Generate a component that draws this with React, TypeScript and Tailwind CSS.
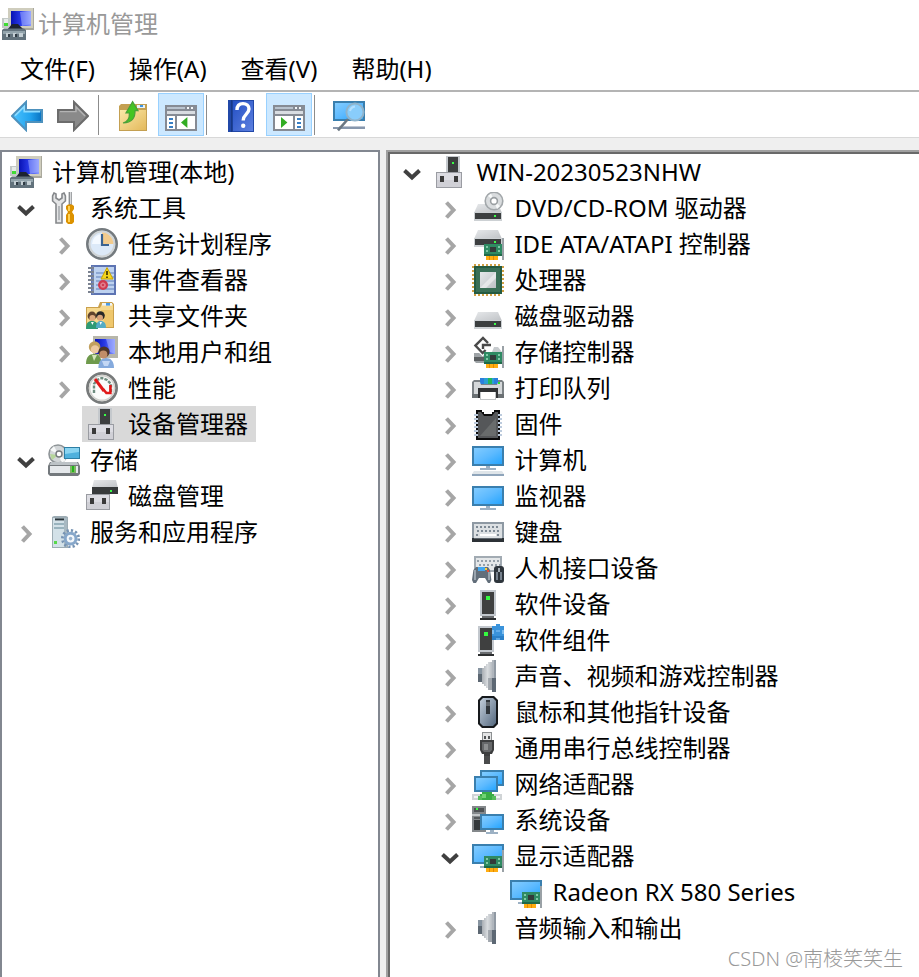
import { ReactNode, useState } from "react";

type TreeNode = {
  id: string;
  label: string;
  icon: ReactNode;
  open?: boolean;
  closed?: boolean;
  children?: TreeNode[];
};

function Icon({ children }: { children: ReactNode }) {
  return (
    <svg
      className="size-8 shrink-0"
      viewBox="0 0 16 16"
      aria-hidden="true"
      fill="none"
    >
      {children}
    </svg>
  );
}

/* shared icon parts */

function Screen({ x = 0, y = 1, w = 16, h = 10 }) {
  return (
    <>
      <rect x={x} y={y} width={w} height={h} fill="#3a7fae" />
      <rect x={x + 1} y={y + 1} width={w - 2} height={h - 2} fill="url(#screen)" />
    </>
  );
}

function Card() {
  return (
    <>
      <path d="M15 5h1v11h-1z" fill="#9aa1a6" />
      <path d="M6 8h9v6H6z" fill="#2f8a63" />
      <path d="M6 13h9v1H6z" fill="#206a4a" />
      <path d="M7 9h1v1H7zM7 11h1v1H7zM13 9h1v1h-1zM13 11h1v1h-1z" fill="#7fc9a6" />
      <path d="M9 9.5h3v2.5H9z" fill="#333b3a" />
      <path d="M7 14h6v2H7z" fill="#ffae12" />
      <path d="M8.5 14h.5v2h-.5zM10.5 14h.5v2h-.5z" fill="#e58a00" />
    </>
  );
}

function Drive({ x = 1, y = 6, w = 14 }) {
  return (
    <>
      <path d={`M${x + 2} ${y}h${w - 4}l2 4.5H${x}z`} fill="url(#metal)" />
      <rect x={x} y={y + 4} width={w} height="4.5" fill="#cdd1d4" />
      <rect x={x + 0.5} y={y + 4.5} width={w - 1} height="3" fill="#3c3f40" />
      <rect x={x + w - 4} y={y + 5.5} width="1" height="1" fill="#3cff4a" />
    </>
  );
}

function Speaker() {
  return (
    <Icon>
      <path d="M3 4h2v7H3z" fill="#5c6772" />
      <path d="M3 4h2v3H3z" fill="#8794a0" />
      <path d="M5 4h1V3h1V2h1V1h2V0h2v16h-2v-1H8v-1H7v-1H6v-1H5z" fill="url(#cone)" />
      <path d="M10 0h2v16h-2z" fill="#9099a3" />
      <path d="M10 0h1v16h-1z" fill="#b0b6bd" />
      <path d="M10 9h2v7h-2z" fill="#5d6874" />
      <path d="M8 9h2v6H8z" fill="#858c94" opacity=".6" />
    </Icon>
  );
}

function ComputerManagement() {
  return (
    <Icon>
      <path d="M3 0h13v11H3z" fill="#aaa99d" />
      <path d="M3 0h12.5v10H3z" fill="#cfcdbd" />
      <path d="M4.500 1.500h10V9h-10z" fill="url(#blue)" />
      <path d="M9 2l5.500-.5V8L10 9z" fill="#aab8ff" opacity=".5" />
      <path d="M0 5h4v5H0z" fill="#c3c9c7" />
      <path d="M1 5.500h2v3H1z" fill="#e6ebe7" />
      <path d="M1 7.500h2V9H1z" fill="#3fdc34" />
      <path d="M3 10.500l2-2.500h3l2.500 2.500z" fill="#1c2330" />
      <path d="M0 11l1-.8h10l1 .8v5H0z" fill="#62727c" />
      <path d="M.5 11.500h11V13H.5z" fill="#93a4ac" />
      <path d="M2 12.500h2v2H2zM5.500 12.500H7v2H5.500zM8.500 12.500h2v2h-2z" fill="#c3ced3" />
      <path d="M3 13h1v1.500H3zM6.500 13h1v1.500h-1z" fill="#2f3b44" />
    </Icon>
  );
}

function Tools() {
  return (
    <Icon>
      <path
        d="M3 .5L2.300 2v2.500L4 6v9.500h3V6l1.700-1.500V2L8 .5 7 1v2L5.500 4 4 3V1z"
        fill="#e4e5e6"
        stroke="#85888b"
        strokeWidth=".8"
      />
      <path d="M5 7h1v7H5z" fill="#b4b7ba" />
      <path d="M10.300 0h1.600v7h-1.600z" fill="#8b8e91" />
      <path d="M11 0h.5v6H11z" fill="#d7d9da" />
      <path d="M9 7l1-.7h2l1 .7v1.500L12 10l1 1.500V15l-1 1h-2l-1-1v-3.500L10 10 9 8.500z" fill="#dc9200" />
      <path d="M10 7h1v2.500h-1zM10 11h1v4h-1z" fill="#ffd257" />
    </Icon>
  );
}

function Clock() {
  return (
    <Icon>
      <circle cx="8" cy="8" r="7.300" fill="#dce9f8" stroke="#747a7e" strokeWidth="1.400" />
      <circle cx="8" cy="8" r="6.200" stroke="#d0d4d6" />
      <path d="M8 8V2.300A5.700 5.700 0 0 1 13.700 8z" fill="#f2cb8d" />
      <path d="M3 8a5 5 0 0 1 5-5v5z" fill="#f4f9ff" />
      <path d="M8 3v5.500h3.500" stroke="#3b6391" strokeWidth="1.100" />
    </Icon>
  );
}

function EventViewer() {
  return (
    <Icon>
      <path d="M2.500 .5H15v15H2.500z" fill="#5d74b3" />
      <path d="M4 1.500h10v13H4z" fill="#bed2ef" />
      <path d="M5 4.500h9M5 6.500h9M5 8.500h9M5 10.500h9M5 12.500h9" stroke="#7f9acb" strokeWidth=".7" />
      <path d="M3.500 1v14" stroke="#7688b5" />
      <path d="M1 2h3M1 4h3M1 6h3M1 8h3M1 10h3M1 12h3M1 14h3" stroke="#7b8290" strokeWidth=".9" />
      <path d="M10.500 1.800l3 5.700h-6z" fill="#f4d51e" stroke="#c9a300" strokeWidth=".5" />
      <path d="M10.500 3.500v2M10.500 6.200v.8" stroke="#4a3c00" strokeWidth=".9" />
      <circle cx="8.500" cy="10.500" r="2.500" fill="#cf3a50" />
      <circle cx="8.500" cy="10.500" r="1.300" fill="#e99aa6" />
      <path d="M7.800 9.800l1.400 1.400M9.200 9.800l-1.400 1.400" stroke="#cf3a50" strokeWidth=".6" />
    </Icon>
  );
}

function SharedFolder() {
  return (
    <Icon>
      <path d="M0 3.500h6L7 1h6l1 1v12H0z" fill="#caa04c" />
      <path d="M.5 4H7l1-2h5.500v11.500H.5z" fill="#f6d88d" />
      <path d="M7.500 5h6v8.500h-4z" fill="#efc76c" />
      <path d="M8 1.500h5v1.300H8z" fill="#eef4f8" />
      <path d="M10 1.500h2v1.300h-2z" fill="#4a9be6" />
      <path d="M0 14.500c0-3 1-4 3-4s3 1 3 4z" fill="#2f9a74" />
      <path d="M5 14c0-2.700 1-3.500 2.500-3.500S10 11.500 10 14z" fill="#55acc5" />
      <circle cx="3" cy="8" r="2.200" fill="#62452d" />
      <circle cx="3.200" cy="9" r="1.500" fill="#e0ad80" />
      <circle cx="7.200" cy="7.800" r="2.200" fill="#2a2927" />
      <circle cx="7" cy="8.900" r="1.500" fill="#dba57a" />
      <path d="M2.500 11l.7 1.500.7-1.500zM6.800 11l.5 1.500.7-1.500z" fill="#fff" />
    </Icon>
  );
}

function Users() {
  return (
    <Icon>
      <path d="M3.500 0H16v11H3.500z" fill="#b7b6aa" />
      <path d="M4.500 1.500h10V9h-10z" fill="url(#blue)" />
      <path d="M10 1.500h4.500V9L12 8z" fill="#aebaff" opacity=".5" />
      <path d="M0 14c0-3.500 1.500-5 4-5s3.500 1.500 4 5z" fill="#6f9a4c" />
      <path d="M3 9.500l1 3 1.500-3z" fill="#d4e6bb" />
      <circle cx="4.300" cy="5.500" r="2.900" fill="#c2a05e" />
      <circle cx="4.500" cy="6.700" r="2.100" fill="#edc9a0" />
      <path d="M6.200 16c0-3.500 1.500-5 3.800-5s4 1.500 4 5z" fill="#85aadd" />
      <path d="M8 12.500l1 2.500h2l1-2.500z" fill="#c3d7f4" />
      <circle cx="9" cy="8" r="2.800" fill="#4c3527" />
      <circle cx="8.700" cy="9.300" r="2" fill="#c08d68" />
    </Icon>
  );
}

function Performance() {
  return (
    <Icon>
      <circle cx="8" cy="8" r="7.300" fill="#fbfbfa" stroke="#777a7a" strokeWidth="1.400" />
      <circle cx="8" cy="8" r="6.200" stroke="#d2d2ce" strokeWidth=".8" />
      <path
        d="M4 10.500V6l1.500-2 2.500-1 2.500 1 2 2v4.500"
        stroke="#6f8d80"
        strokeWidth="1.200"
        strokeDasharray="1.600 .6"
      />
      <path d="M4.500 3.500L9 9.500" stroke="#e01818" strokeWidth="1.500" />
      <path d="M8.500 8.500l1.700 2h2V6.500" stroke="#e01818" strokeWidth="1.300" />
    </Icon>
  );
}

function DeviceManager() {
  return (
    <Icon>
      <path d="M6 0h7v8H6z" fill="#c5c9cd" />
      <path d="M7 .5h5V8H7z" fill="#3d3f40" />
      <path d="M9 3h1v1H9z" fill="#38ff45" />
      <path d="M1 8h13v8H1z" fill="#9a9ca2" />
      <path d="M1.500 8.500h12v7h-12z" fill="#dcdce2" />
      <path d="M1.500 12h12v3.500h-12z" fill="#d0d0d6" />
      <path d="M3 10h2v3H3zM10 10h2v3h-2z" fill="#3a3a3a" />
    </Icon>
  );
}

function Storage() {
  return (
    <Icon>
      <circle cx="5" cy="5" r="4.500" fill="#d2d6d8" stroke="#8e9497" strokeWidth=".8" />
      <path d="M5 5L1 3l2-2zM5 5l4 3-2 1.500z" fill="#f6f8f8" />
      <path d="M1 5l4 .5L2 8z" fill="#b6d69b" />
      <circle cx="5.500" cy="5" r="1.500" fill="#fff" stroke="#74797c" strokeWidth=".7" />
      <path d="M8 1.500h8v6H8z" fill="#2e7fa5" />
      <path d="M8.500 2h7v5h-7z" fill="#4fb1dd" />
      <path d="M8.500 2h7v2l-7 1z" fill="#8ad4f1" />
      <path d="M1 9h14l1 2v4l-1 1H1l-1-1v-4z" fill="#74797d" />
      <path d="M1.500 9h13l.8 1.500H.7z" fill="#bcc2c6" />
      <path d="M1 11h14v3.500H1z" fill="#e5e8eb" />
      <path d="M11 11h3v3.500h-3z" fill="#7fb665" />
      <path d="M12 11h1v3h-1z" fill="#24b51c" />
    </Icon>
  );
}

function DiskManagement() {
  return (
    <Icon>
      <path d="M4 0h11l1 4H3z" fill="url(#metal)" />
      <path d="M3 3.500h13V7H3z" fill="#373a3b" />
      <path d="M12 5h1v1h-1z" fill="#38ff45" />
      <path d="M0 7h12v8H0z" fill="#9a9ca2" />
      <path d="M.5 7.500h11v7H.5z" fill="#dcdce2" />
      <path d="M.5 11h11v3.500H.5z" fill="#d0d0d6" />
      <path d="M2 9h2v3H2zM8 9h2v3H8z" fill="#3a3a3a" />
    </Icon>
  );
}

function Services() {
  return (
    <Icon>
      <path d="M2 .5L3 0h6l1 .5V16H2z" fill="#9dacb4" />
      <path d="M2.500 1H8v14.500H2.500z" fill="#d3e1e8" />
      <path d="M8 1h1.500v14.500H8z" fill="#a8b9c2" />
      <path d="M3.500 1.200H8v1H3.500z" fill="#29343a" />
      <path d="M3 4h5M3 6h5" stroke="#87a4b0" strokeWidth=".8" />
      <path d="M3 12.500h1.500V14H3z" fill="#58d94a" />
      <circle cx="11.300" cy="11.300" r="4.100" stroke="#7693b3" strokeWidth="1.400" strokeDasharray="1.100 1.050" />
      <circle cx="11.300" cy="11.300" r="2.700" fill="#f3f7fb" stroke="#86a7ca" strokeWidth="1.500" />
      <circle cx="11.300" cy="11.300" r=".9" fill="#9bb5d0" />
    </Icon>
  );
}

function Dvd() {
  return (
    <Icon>
      <Drive y={6} />
      <circle cx="11" cy="4.500" r="4.400" fill="#d9dcde" stroke="#a2a7aa" strokeWidth=".8" />
      <path d="M11 4.500L8 2 9.500.700zM11 4.500l3 2.500-1.500 1.500z" fill="#f7f9f9" />
      <circle cx="11" cy="4.500" r="1.700" fill="#fff" stroke="#9a9fa2" strokeWidth=".8" />
    </Icon>
  );
}

function Ide() {
  return (
    <Icon>
      <Drive y={1} />
      <Card />
    </Icon>
  );
}

function Cpu() {
  return (
    <Icon>
      <path
        d="M1 .5h14M1 15.500h14M.5 1v14M15.500 1v14"
        stroke="#d0a045"
        strokeDasharray="1 1"
      />
      <path d="M1 1h14v14H1z" fill="#245b42" />
      <path d="M2 2h12v12H2z" fill="#396f56" />
      <path d="M4 4h8v8H4z" fill="url(#metal)" />
      <path d="M4 12l8-8v3l-5 5z" fill="#f5f5f5" opacity=".6" />
    </Icon>
  );
}

function StorageController() {
  return (
    <Icon>
      <path d="M1 8.500h7v5H2l-1-1z" fill="#9ea3a6" />
      <path d="M1 10.500h6v2H1z" fill="#5b5f61" />
      <path d="M11 5.500h2l2 2.500h-5z" fill="#c7cbce" />
      <path
        d="M8 3.500L5.500 1 1.700 4.800l3.600 3.700 1.500-1.500M9.500 4.500h-4v3"
        stroke="#fff"
        strokeWidth="2.400"
      />
      <path
        d="M8 3.500L5.500 1 1.700 4.800l3.600 3.700 1.500-1.500M9.500 4.500h-4v2"
        stroke="#4a4a4a"
        strokeWidth="1.200"
      />
      <Card />
    </Icon>
  );
}

function Printer() {
  return (
    <Icon>
      <path d="M4 3h9v3H4z" fill="#2a7fdd" />
      <path d="M6 3h5v3H6z" fill="#2a9fd4" />
      <path d="M8 3h2v3H8z" fill="#23b65b" />
      <path d="M1 4h3v2h9V4h2l1 1v8H0V5z" fill="#7b8185" />
      <path d="M1 5h3l.5 1.500h8L13 5h2v7H1z" fill="#d5d8da" />
      <path d="M13 5h1v1h-1z" fill="#25e32c" />
      <path d="M0 11h3v2H0zM13 11h3v2h-3z" fill="#6a7073" />
      <path d="M3 8h10v5h-1v-2.500H4V13H3z" fill="#303234" />
      <path d="M4 10h8v4H4z" fill="#c2c5c7" />
      <path d="M4.500 10h7v3.500h-7z" fill="#fff" />
    </Icon>
  );
}

function Firmware() {
  return (
    <Icon>
      <path d="M2 1h3v1h1v1h4V2h1V1h3v15H2z" fill="#0c0c0c" />
      <path d="M3 2h1.500l1.500 2h4l1.500-2H13v13H3z" fill="#555759" />
      <path d="M4 14l8-9v9z" fill="#77797a" opacity=".6" />
      <path d="M2 3v11M14 3v11" stroke="#bccbdd" strokeWidth="2" strokeDasharray="1 1" />
    </Icon>
  );
}

function Computer() {
  return (
    <Icon>
      <Screen />
      <path d="M7 11h2v1h3v1H4v-1h3z" fill="#9cb1c4" />
      <path d="M1 13.500h14l1 1.500H0z" fill="#dfe5e9" />
      <path d="M0 15h16v1H0z" fill="#8fa5bb" />
    </Icon>
  );
}

function Monitor() {
  return (
    <Icon>
      <Screen y={3} />
      <path d="M7 13h2v1h3v1H4v-1h3z" fill="#9cb1c4" />
    </Icon>
  );
}

function Keyboard() {
  return (
    <Icon>
      <path d="M0 3h16v9H0z" fill="#8e99a3" />
      <path d="M1 4h14v7H1z" fill="#dce0e3" />
      <path
        d="M2 5.500h12M2.500 7.500h12M2 9.500h2M12.500 9.500h2"
        stroke="#7d8994"
        strokeDasharray="1 1"
      />
      <path d="M4 9h8v1H4z" fill="#fff" />
      <path d="M0 11h16v2H0z" fill="#2c3136" />
      <path d="M1 11h14v.5H1z" fill="#5e666d" />
    </Icon>
  );
}

function Hid() {
  return (
    <Icon>
      <path d="M1 2h14v8H1z" fill="#a2abb3" />
      <path d="M2 3h12v6H2z" fill="#e4e7e9" />
      <path d="M2.500 4.500h11M3.500 6.500h11" stroke="#959fa8" strokeDasharray="1 1" />
      <path
        d="M2 7.500h6l1 1.500.7 5-.7 1.500H8L6.500 13h-3L2 15.500H.7L0 14l.7-5z"
        fill="#626e7a"
      />
      <path d="M1 9h1v5H1zM8 10h1v4H8z" fill="#99a4ae" />
      <path d="M3 7.500h3.500v2H3z" fill="#43a7ef" />
      <path d="M6.500 8h1v1h-1z" fill="#ffce32" />
      <path d="M7.500 9h1v1h-1z" fill="#e94a35" />
      <rect x="11" y="7" width="5" height="8.500" rx="1.500" fill="#2e353c" />
      <path d="M12 10h1v4h-1zM14 10h1v4h-1z" fill="#77828e" />
      <path d="M13 8h1v2h-1z" fill="#a7b0b8" />
    </Icon>
  );
}

function Software({ component = false }) {
  const x = component ? 3 : 4;
  return (
    <Icon>
      <rect x={x} y="1" width="8" height="13" fill="#c3c8ce" />
      <rect x={x + 1} y="2" width="6" height="11" fill="#3f4040" />
      <rect x={x + 3} y="4" width="2" height="2" fill="#35fa40" />
      <rect x={x + 1} y="14" width="6" height="1" fill="#6a6d70" />
      <rect x={x} y="15" width="8" height="1" fill="#2d2f30" />
      {component && (
        <>
          <path d="M10 1h2V0h2v1h2v7h-6z" fill="#3a93db" />
          <path d="M10 3h1v2h-1zM15 3h1v2h-1z" fill="#7fbdee" />
          <path d="M12 3h2v1h-2z" fill="#62acea" />
          <path d="M10 6h6v2h-6z" fill="#2b80c8" />
          <path d="M12 7h2v1h-2z" fill="#5fa8e4" />
        </>
      )}
    </Icon>
  );
}

function Mouse() {
  return (
    <Icon>
      <path d="M5 0h6l2 2v12l-2 2H5l-2-2V2z" fill="#16191c" />
      <path d="M5.500 1h5L12 2.500v11L10.500 15h-5L4 13.500v-11z" fill="url(#mouse)" />
      <path d="M7 2h2v7H7z" fill="#30363c" />
      <path d="M7 3h2v2H7z" fill="#62686e" />
    </Icon>
  );
}

function Usb() {
  return (
    <Icon>
      <path d="M5 0h5v5H5z" fill="#8c8f91" />
      <path d="M5.500.500h4V5h-4z" fill="#e3e4e5" />
      <path d="M6 2h1v1.500H6zM8 2h1v1.500H8z" fill="#505355" />
      <path d="M4 4h7v5l-1 2H9v1H6v-1H5L4 9z" fill="#3d3e3f" />
      <path d="M5 5h5v4l-1 1H6L5 9z" fill="#66686a" />
      <path d="M6 6h2v3H6z" fill="#8d8f90" />
      <path d="M6 12h3v4H6z" fill="#4a4b4c" />
    </Icon>
  );
}

function Network() {
  return (
    <Icon>
      <Screen x={4} w={12} h={8} />
      <Screen x={1} y={4} w={12} h={8} />
      <path d="M0 13h15v3H0z" fill="#d0d4d6" />
      <path d="M1 14h13v1H1z" fill="#f2f4f5" />
      <path d="M5 12h5v1h1v3H4v-3h1z" fill="#39ad45" />
      <path d="M5 13h2v2H5z" fill="#72d474" />
      <path d="M3 14h2v2H3zM10 14h2v2h-2z" fill="#57bd5b" />
    </Icon>
  );
}

function SystemDevices() {
  return (
    <Icon>
      <path d="M0 1h7v13H0z" fill="#84888b" />
      <path d="M1 2h5v2H1z" fill="#4e5254" />
      <path d="M2 2h1v1H2z" fill="#39ff44" />
      <path d="M0 5h6v1H0z" fill="#c3c7c9" />
      <path d="M1 8h3v5H1z" fill="#34383a" />
      <path d="M1 6.500h3v1H1z" fill="#53585a" />
      <Screen x={4} y={5} w={12} h={8} />
      <path d="M9 13h2v1h2v1H7v-1h2z" fill="#9cb1c4" />
    </Icon>
  );
}

function DisplayAdapter() {
  return (
    <Icon>
      <Screen y={2} />
      <path d="M4 13h3v1H4z" fill="#9cb1c4" />
      <Card />
    </Icon>
  );
}

/* toolbar icons */

function Arrow({ forward = false }) {
  return (
    <Icon>
      {forward ? (
        <path d="M15.500 8L8.500 1v4H.5v6h8v4z" fill="#8a8a8a" stroke="#6c6c6c" />
      ) : (
        <path d="M.5 8l7-7v4h8v6h-8v4z" fill="url(#back)" stroke="#4d91bd" />
      )}
      {forward ? (
        <path d="M1.500 5.800h8V3.500L14 8" stroke="#b4b4b4" strokeWidth=".7" />
      ) : (
        <path d="M2 7.800l4.600-4.500v2.500h8" stroke="#8fdcff" strokeWidth=".8" />
      )}
    </Icon>
  );
}

function UpFolder() {
  return (
    <Icon>
      <path d="M1 3l1-1h6v1l1-1h6v13.500H1z" fill="#c4a052" />
      <path d="M1.500 5h13v10h-13z" fill="url(#folder)" />
      <path d="M10 2.500h4V4h-4z" fill="#e9f3f8" />
      <path d="M11.500 2.500H13v1h-1.500z" fill="#3f96e2" />
      <path
        d="M3 11.500c2.500-.5 3.300-2.500 3.200-5H4.500L7.800.800l2.700 4.500H9c.2 3.500-1.500 6-6 6.200z"
        fill="#45c522"
        stroke="#49a03a"
        strokeWidth=".6"
      />
    </Icon>
  );
}

function PanelIcon({ right = false }) {
  return (
    <Icon>
      <path d="M0 2.500h16v13H0z" fill="#868b94" />
      <path d="M1 3.500h9v1H1z" fill="#b9c3ce" />
      <path d="M11 3.500h1v1h-1zM13 3.500h1v1h-1z" fill="#f5f8fa" />
      <path d="M1 5.500h14V7H1z" fill="#d9dde2" />
      <path d="M1 8h14v6.500H1z" fill="#fff" />
      {right ? (
        <>
          <path d="M10 8h1v7h-1z" fill="#868b94" />
          <path d="M12 9h2v1h-2zM12 11h2v1h-2zM12 13h2v1h-2z" fill="#397fc4" />
          <path d="M4 8.500l3.200 2.700L4 14z" fill="#32ad24" />
        </>
      ) : (
        <>
          <path d="M5 8h1v7H5z" fill="#868b94" />
          <path d="M2 9h2v1H2zM2 11h2v1H2zM2 13h2v1H2z" fill="#397fc4" />
          <path d="M11.200 8.500V14L8 11.200z" fill="#32ad24" />
        </>
      )}
    </Icon>
  );
}

function Help() {
  return (
    <Icon>
      <path d="M1.500 0h13v16h-13z" fill="#2148a8" />
      <path d="M4 .5h10v15H4z" fill="url(#help)" />
      <path d="M3 0h.7v16H3z" fill="#183986" />
      <path
        d="M6 5c0-2.500 1.300-3.200 3-3.200s3 1 3 2.700c0 2.500-2.900 2.700-2.900 5.700"
        stroke="#fff"
        strokeWidth="1.700"
      />
      <circle cx="9.100" cy="12.900" r="1.100" fill="#fff" />
    </Icon>
  );
}

function ScanMonitor() {
  return (
    <Icon>
      <Screen y={0.5} />
      <path d="M3 13h13v1H3z" fill="#bdc6d3" />
      <path d="M0 13.500h16v1H0z" fill="#8797ad" />
      <path d="M7.500 9.500l-5 5.700" stroke="#6b7782" strokeWidth="1.300" />
      <circle cx="11" cy="6" r="4.300" fill="#89cdfb" stroke="#8fb3cb" />
      <path d="M8.500 5.500A3 3 0 0 1 11 3.300" stroke="#b4e0ff" />
    </Icon>
  );
}

const consoleTree: TreeNode = {
  id: "root",
  label: "计算机管理(本地)",
  icon: <ComputerManagement />,
  children: [
    {
      id: "tools",
      label: "系统工具",
      icon: <Tools />,
      open: true,
      children: [
        { id: "tasks", label: "任务计划程序", icon: <Clock />, closed: true },
        { id: "events", label: "事件查看器", icon: <EventViewer />, closed: true },
        { id: "shares", label: "共享文件夹", icon: <SharedFolder />, closed: true },
        { id: "users", label: "本地用户和组", icon: <Users />, closed: true },
        { id: "perf", label: "性能", icon: <Performance />, closed: true },
        { id: "devices", label: "设备管理器", icon: <DeviceManager /> },
      ],
    },
    {
      id: "storage",
      label: "存储",
      icon: <Storage />,
      open: true,
      children: [{ id: "disks", label: "磁盘管理", icon: <DiskManagement /> }],
    },
    { id: "services", label: "服务和应用程序", icon: <Services />, closed: true },
  ],
};

const deviceTree: TreeNode = {
  id: "host",
  label: "WIN-20230523NHW",
  icon: <DeviceManager />,
  open: true,
  children: [
    { id: "dvd", label: "DVD/CD-ROM 驱动器", icon: <Dvd />, closed: true },
    { id: "ide", label: "IDE ATA/ATAPI 控制器", icon: <Ide />, closed: true },
    { id: "cpu", label: "处理器", icon: <Cpu />, closed: true },
    { id: "disk", label: "磁盘驱动器", icon: <Icon><Drive /></Icon>, closed: true },
    { id: "controller", label: "存储控制器", icon: <StorageController />, closed: true },
    { id: "print", label: "打印队列", icon: <Printer />, closed: true },
    { id: "firmware", label: "固件", icon: <Firmware />, closed: true },
    { id: "computer", label: "计算机", icon: <Computer />, closed: true },
    { id: "monitor", label: "监视器", icon: <Monitor />, closed: true },
    { id: "keyboard", label: "键盘", icon: <Keyboard />, closed: true },
    { id: "hid", label: "人机接口设备", icon: <Hid />, closed: true },
    { id: "software", label: "软件设备", icon: <Software />, closed: true },
    { id: "component", label: "软件组件", icon: <Software component />, closed: true },
    { id: "sound", label: "声音、视频和游戏控制器", icon: <Speaker />, closed: true },
    { id: "mouse", label: "鼠标和其他指针设备", icon: <Mouse />, closed: true },
    { id: "usb", label: "通用串行总线控制器", icon: <Usb />, closed: true },
    { id: "network", label: "网络适配器", icon: <Network />, closed: true },
    { id: "system", label: "系统设备", icon: <SystemDevices />, closed: true },
    {
      id: "display",
      label: "显示适配器",
      icon: <DisplayAdapter />,
      open: true,
      children: [
        { id: "radeon", label: "Radeon RX 580 Series", icon: <DisplayAdapter /> },
      ],
    },
    { id: "audio", label: "音频输入和输出", icon: <Speaker />, closed: true },
  ],
};

type TreeItemProps = {
  node: TreeNode;
  selected: string;
  onSelect: (id: string) => void;
  isRoot?: boolean;
};

function TreeItem({ node, selected, onSelect, isRoot }: TreeItemProps) {
  const fixed = isRoot && !node.open;
  const [open, setOpen] = useState(Boolean(node.open) || Boolean(fixed));

  return (
    <li>
      <div className="flex h-9">
        {!fixed &&
          (node.open || node.closed ? (
            <button
              type="button"
              aria-label={node.label}
              aria-expanded={open}
              onClick={() => setOpen(!open)}
              className="flex w-[38px] shrink-0 items-center justify-center pt-1 pl-0.5"
            >
              <svg width="20" height="20" viewBox="0 0 20 20" fill="none">
                {open ? (
                  <path d="M2.500 6.500L10 13.500l7.500-7" stroke="#404040" strokeWidth="4" />
                ) : (
                  <path d="M6.500 2.500L13.500 10l-7 7.500" stroke="#a6a6a6" strokeWidth="4" />
                )}
              </svg>
            </button>
          ) : (
            <span className="w-[38px] shrink-0" />
          ))}
        <button
          type="button"
          onClick={() => onSelect(node.id)}
          className={`flex items-center gap-2.5 whitespace-nowrap pl-1 pr-2 ${
            selected === node.id ? "bg-[#d9d9d9]" : ""
          }`}
        >
          {node.icon}
          <span>{node.label}</span>
        </button>
      </div>
      {open && node.children && (
        <ul className={fixed ? "" : "pl-[38px]"}>
          {node.children.map((child) => (
            <TreeItem
              key={child.id}
              node={child}
              selected={selected}
              onSelect={onSelect}
            />
          ))}
        </ul>
      )}
    </li>
  );
}

type ToolButtonProps = { label: string; active?: boolean; children: ReactNode };

function ToolButton({ label, active, children }: ToolButtonProps) {
  return (
    <button
      type="button"
      aria-label={label}
      className={`flex h-[43px] w-[46px] items-center justify-center border pt-0.5 ${
        active ? "border-[#99d1ff] bg-[#cce8ff]" : "border-transparent"
      }`}
    >
      {children}
    </button>
  );
}

function Separator() {
  return <span className="ml-0.5 mr-[11px] h-10 w-px bg-[#8c8c8c]" />;
}

const menus = ["文件(F)", "操作(A)", "查看(V)", "帮助(H)"];

function App() {
  const [selected, setSelected] = useState("devices");
  const [device, setDevice] = useState("");

  return (
    <div className="relative flex min-h-screen flex-col bg-white font-['Noto_Sans','Noto_Sans_CJK_SC',sans-serif] text-2xl leading-9 text-black">
      {/* gradients used by the icons */}
      <svg className="absolute size-0" aria-hidden="true">
        <defs>
          <linearGradient id="screen" x1="0" y1="0" x2="1" y2="1">
            <stop offset="0" stopColor="#83ccff" />
            <stop offset=".5" stopColor="#5dbaff" />
            <stop offset="1" stopColor="#25a5ff" />
          </linearGradient>
          <linearGradient id="metal" x1="0" y1="0" x2="1" y2="1">
            <stop offset="0" stopColor="#e6e8ea" />
            <stop offset="1" stopColor="#bfc2c6" />
          </linearGradient>
          <linearGradient id="blue" x1="0" y1="0" x2="1" y2="0">
            <stop offset="0" stopColor="#0812b4" />
            <stop offset=".5" stopColor="#2a3be8" />
            <stop offset="1" stopColor="#8d9cff" />
          </linearGradient>
          <linearGradient id="cone" x1="0" y1="0" x2="1" y2="0">
            <stop offset="0" stopColor="#a9aeb4" />
            <stop offset=".4" stopColor="#d9dcdf" />
            <stop offset="1" stopColor="#9aa1a8" />
          </linearGradient>
          <linearGradient id="mouse" x1="0" y1="0" x2="1" y2="1">
            <stop offset="0" stopColor="#c2cedb" />
            <stop offset="1" stopColor="#54687e" />
          </linearGradient>
          <linearGradient id="back" x1="0" y1="0" x2="1" y2="0">
            <stop offset="0" stopColor="#4ec4ff" />
            <stop offset=".6" stopColor="#22a3ee" />
            <stop offset="1" stopColor="#0871c0" />
          </linearGradient>
          <linearGradient id="folder" x1="0" y1="0" x2="1" y2="1">
            <stop offset="0" stopColor="#fbe8a8" />
            <stop offset="1" stopColor="#e3b95c" />
          </linearGradient>
          <linearGradient id="help" x1="0" y1="0" x2="1" y2="1">
            <stop offset="0" stopColor="#2450c4" />
            <stop offset="1" stopColor="#5d80e0" />
          </linearGradient>
        </defs>
      </svg>

      <header className="flex h-12 items-center gap-1 pl-0.5 text-[#999999]">
        <ComputerManagement />
        <h1>计算机管理</h1>
      </header>

      <nav className="flex h-11 items-center gap-0.5 border-b-2 border-[#b4b4b4] pl-1">
        {menus.map((menu) => (
          <button key={menu} type="button" className="px-4">
            {menu}
          </button>
        ))}
      </nav>

      {/* toolbar */}
      <div className="flex h-[46px] items-center border-b border-[#d8d8d8] pl-1">
        <ToolButton label="后退">
          <Arrow />
        </ToolButton>
        <ToolButton label="前进">
          <Arrow forward />
        </ToolButton>
        <Separator />
        <div className="flex gap-0.5">
          <ToolButton label="向上">
            <UpFolder />
          </ToolButton>
          <ToolButton label="控制台树" active>
            <PanelIcon />
          </ToolButton>
        </div>
        <Separator />
        <div className="flex gap-0.5">
          <ToolButton label="帮助">
            <Help />
          </ToolButton>
          <ToolButton label="操作窗格" active>
            <PanelIcon right />
          </ToolButton>
        </div>
        <Separator />
        <ToolButton label="扫描">
          <ScanMonitor />
        </ToolButton>
      </div>

      <main className="flex grow gap-1.5 bg-[#efefef] pt-3">
        <aside className="w-[41.4%] shrink-0 border-2 border-b-0 border-[#828790] bg-white py-0.5 pl-1">
          <ul>
            <TreeItem
              node={consoleTree}
              selected={selected}
              onSelect={setSelected}
              isRoot
            />
          </ul>
        </aside>
        <section className="flex grow border-l-2 border-t-2 border-[#a0a0a0]">
          <ul className="grow border-l-2 border-t-2 border-[#696969] bg-white pl-0.5">
            <TreeItem
              node={deviceTree}
              selected={device}
              onSelect={setDevice}
              isRoot
            />
          </ul>
        </section>
      </main>

      <p className="absolute bottom-0.5 right-4 text-xl leading-8 font-light text-[#999999]">
        CSDN @南棱笑笑生
      </p>
    </div>
  );
}

export default App;
